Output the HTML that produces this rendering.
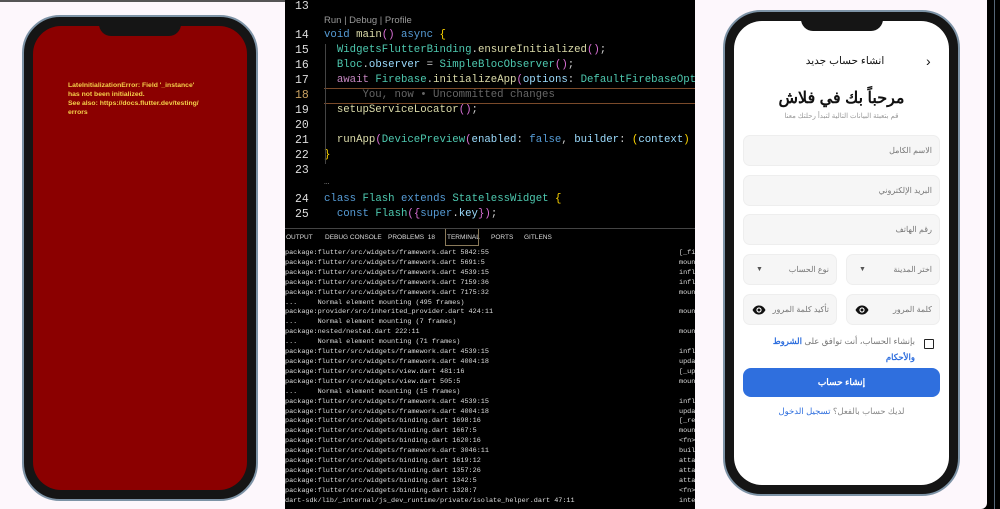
<!DOCTYPE html>
<html><head><meta charset="utf-8"><style>
*{margin:0;padding:0;box-sizing:border-box}
body{width:1000px;height:509px;overflow:hidden;background:#000;position:relative;font-family:"Liberation Sans","Noto Sans CJK SC",sans-serif}
.abs{position:absolute}
#left{left:0;top:0;width:285px;height:509px;background:#fdf7fc;border-top:2px solid #555}
.phone{position:absolute;border-radius:38px;background:#151515;border:2px solid #7d93a6}
.notch{position:absolute;left:50%;transform:translateX(-50%);top:0;width:82px;height:19px;background:#151515;border-radius:0 0 12px 12px}
#code{left:285px;top:0;width:410px;height:228px;background:#000;font-family:"Liberation Mono",monospace;font-size:10.7px;color:#ccc;overflow:hidden}
.ln{position:absolute;left:10px;width:24px;text-align:left;color:#ddd;font-size:11.5px}
.cl{position:absolute;left:39px;white-space:pre}
.k{color:#569cd6}.f{color:#dcdcaa}.t{color:#4ec9b0}.v{color:#9cdcfe}.y{color:#ffd700}.p{color:#c586c0}.m{color:#da70d6}
#tabs{left:285px;top:228px;width:410px;height:18px;border-top:1px solid #444;font-size:6.5px;color:#ddd}
#tabs span{position:absolute;top:5px}
#term,#term2{top:249px;font-family:"Liberation Mono",monospace;font-size:6.8px;color:#ddd;line-height:9.9px;white-space:pre;overflow:hidden}
#term{left:285px;width:395px;height:260px}
#term2{left:679px;width:16px;height:260px}
#right{left:695px;top:0;width:292px;height:509px;background:#fdf7fc;border-radius:0 0 6px 0}
.fld{position:absolute;background:#f6f6f6;border:1px solid #eee;border-radius:7px;font-size:8px;color:#777;text-align:right;padding-right:7px;line-height:29px;direction:rtl}
.eye{position:absolute;left:8px;top:10px}
</style></head><body>
<div id="left" class="abs">
 <div class="phone" style="left:22px;top:13px;width:236px;height:486px">
  <div style="position:absolute;left:9px;top:9px;right:9px;bottom:9px;background:#8b0000;border-radius:28px"></div>
  <div class="notch"></div>
  <div style="position:absolute;left:44px;top:64px;font-size:6.8px;line-height:9px;color:#f5d04a;font-weight:bold">LateInitializationError: Field '_instance'<br>has not been initialized.<br>See also: https://docs.flutter.dev/testing/<br>errors</div>
 </div>
</div>
<div id="code" class="abs">
 <div class="ln" style="top:0">13</div>
 <div class="cl" style="top:15px;left:39px;font-family:'Liberation Sans';font-size:9.5px;color:#999">Run | Debug | Profile</div>
 <div class="ln" style="top:29px">14</div><div class="cl" style="top:29px"><span class="k">void</span> <span class="f">main</span><span class="m">()</span> <span class="k">async</span> <span class="y">{</span></div>
 <div class="ln" style="top:44px">15</div><div class="cl" style="top:44px">  <span class="t">WidgetsFlutterBinding</span>.<span class="f">ensureInitialized</span><span class="m">()</span>;</div>
 <div class="ln" style="top:59px">16</div><div class="cl" style="top:59px">  <span class="t">Bloc</span>.<span class="v">observer</span> = <span class="t">SimpleBlocObserver</span><span class="m">()</span>;</div>
 <div class="ln" style="top:74px">17</div><div class="cl" style="top:74px">  <span class="p">await</span> <span class="t">Firebase</span>.<span class="f">initializeApp</span><span class="m">(</span><span class="v">options</span>: <span class="t">DefaultFirebaseOpti</span></div>
 <div style="position:absolute;left:39px;top:88px;width:371px;height:16px;border-top:1px solid #7a4a2a;border-bottom:1px solid #7a4a2a"></div>
 <div class="ln" style="top:89px;color:#c8a060">18</div><div class="cl" style="top:89px;color:#666">      You, now • Uncommitted changes</div>
 <div class="ln" style="top:104px">19</div><div class="cl" style="top:104px">  <span class="f">setupServiceLocator</span><span class="m">()</span>;</div>
 <div class="ln" style="top:119px">20</div>
 <div class="ln" style="top:134px">21</div><div class="cl" style="top:134px">  <span class="f">runApp</span><span class="m">(</span><span class="t">DevicePreview</span><span class="m">(</span><span class="v">enabled</span>: <span class="k">false</span>, <span class="v">builder</span>: <span class="y">(</span><span class="v">context</span><span class="y">)</span> =</div>
 <div class="ln" style="top:149px">22</div><div class="cl" style="top:149px"><span class="y">}</span></div>
 <div class="ln" style="top:164px">23</div>
 <div class="cl" style="top:177px;color:#777;font-size:9px">…</div>
 <div class="ln" style="top:193px">24</div><div class="cl" style="top:193px"><span class="k">class</span> <span class="t">Flash</span> <span class="k">extends</span> <span class="t">StatelessWidget</span> <span class="y">{</span></div>
 <div class="ln" style="top:208px">25</div><div class="cl" style="top:208px">  <span class="k">const</span> <span class="t">Flash</span><span class="m">({</span><span class="k">super</span>.<span class="v">key</span><span class="m">})</span>;</div>
 <div style="position:absolute;left:40px;top:44px;width:1px;height:120px;background:#444"></div>
</div>
<div id="tabs" class="abs">
 <span style="left:1px">OUTPUT</span><span style="left:40px">DEBUG CONSOLE</span><span style="left:103px">PROBLEMS &nbsp;18</span><span style="left:162px">TERMINAL</span><span style="left:206px">PORTS</span><span style="left:239px">GITLENS</span>
 <div style="position:absolute;left:160px;top:0;width:34px;height:17px;border:1px solid #8a7a5a;border-top:none"></div>
</div>
<div id="term" class="abs">package:flutter/src/widgets/framework.dart 5842:55
package:flutter/src/widgets/framework.dart 5691:5
package:flutter/src/widgets/framework.dart 4539:15
package:flutter/src/widgets/framework.dart 7159:36
package:flutter/src/widgets/framework.dart 7175:32
...     Normal element mounting (495 frames)
package:provider/src/inherited_provider.dart 424:11
...     Normal element mounting (7 frames)
package:nested/nested.dart 222:11
...     Normal element mounting (71 frames)
package:flutter/src/widgets/framework.dart 4539:15
package:flutter/src/widgets/framework.dart 4004:18
package:flutter/src/widgets/view.dart 481:16
package:flutter/src/widgets/view.dart 505:5
...     Normal element mounting (15 frames)
package:flutter/src/widgets/framework.dart 4539:15
package:flutter/src/widgets/framework.dart 4004:18
package:flutter/src/widgets/binding.dart 1698:16
package:flutter/src/widgets/binding.dart 1667:5
package:flutter/src/widgets/binding.dart 1620:16
package:flutter/src/widgets/framework.dart 3046:11
package:flutter/src/widgets/binding.dart 1619:12
package:flutter/src/widgets/binding.dart 1357:26
package:flutter/src/widgets/binding.dart 1342:5
package:flutter/src/widgets/binding.dart 1328:7
dart-sdk/lib/_internal/js_dev_runtime/private/isolate_helper.dart 47:11</div>
<div id="term2" class="abs">[_fi
moun
infl
infl
moun

moun

moun

infl
upda
[_up
moun

infl
upda
[_re
moun
&lt;fn&gt;
buil
atta
atta
atta
&lt;fn&gt;
inte</div>
<div id="right" class="abs">
 <div class="phone" style="left:28px;top:10px;width:237px;height:486px">
  <div style="position:absolute;left:9px;top:9px;right:9px;bottom:9px;background:#fff;border-radius:28px"></div>
  <div class="notch"></div>
 </div>
 <div class="abs" style="left:70px;top:55px;width:160px;text-align:center;font-size:10.5px;color:#111;direction:rtl">انشاء حساب جديد</div>
 <div class="abs" style="left:231px;top:53px;font-size:14px;color:#111">&#8250;</div>
 <div class="abs" style="left:48px;top:88px;width:197px;text-align:center;font-size:16px;font-weight:bold;color:#111;direction:rtl">مرحباً بك في فلاش</div>
 <div class="abs" style="left:48px;top:112px;width:197px;text-align:center;font-size:7px;color:#999;direction:rtl">قم بتعبئة البيانات التالية لتبدأ رحلتك معنا</div>
 <div class="fld" style="left:48px;top:135px;width:197px;height:31px">الاسم الكامل</div>
 <div class="fld" style="left:48px;top:175px;width:197px;height:31px">البريد الإلكتروني</div>
 <div class="fld" style="left:48px;top:214px;width:197px;height:31px">رقم الهاتف</div>
 <div class="fld" style="left:151px;top:254px;width:94px;height:31px">اختر المدينة<span style="position:absolute;left:12px;font-size:7px;color:#555">▼</span></div>
 <div class="fld" style="left:48px;top:254px;width:94px;height:31px">نوع الحساب<span style="position:absolute;left:12px;font-size:7px;color:#555">▼</span></div>
 <div class="fld" style="left:151px;top:294px;width:94px;height:31px">كلمة المرور<svg class="eye" width="14" height="10" viewBox="0 0 14 10"><path d="M0.5 5C2.5 1.5 4.5 0.5 7 0.5S11.5 1.5 13.5 5C11.5 8.5 9.5 9.5 7 9.5S2.5 8.5 0.5 5Z" fill="#111"/><circle cx="7" cy="5" r="2.6" fill="#fff"/><circle cx="7" cy="5" r="1.5" fill="#111"/></svg></div>
 <div class="fld" style="left:48px;top:294px;width:94px;height:31px">تأكيد كلمة المرور<svg class="eye" width="14" height="10" viewBox="0 0 14 10"><path d="M0.5 5C2.5 1.5 4.5 0.5 7 0.5S11.5 1.5 13.5 5C11.5 8.5 9.5 9.5 7 9.5S2.5 8.5 0.5 5Z" fill="#111"/><circle cx="7" cy="5" r="2.6" fill="#fff"/><circle cx="7" cy="5" r="1.5" fill="#111"/></svg></div>
 <div class="abs" style="left:229px;top:339px;width:10px;height:10px;border:1.5px solid #222;border-radius:1px"></div>
 <div class="abs" style="left:70px;top:333px;width:150px;text-align:right;font-size:8.5px;line-height:16px;color:#777;direction:rtl">بإنشاء الحساب، أنت توافق على <b style="color:#2f6fde">الشروط والأحكام</b></div>
 <div class="abs" style="left:48px;top:368px;width:197px;height:29px;background:#2f6fde;border-radius:8px;color:#fff;font-size:9px;font-weight:bold;text-align:center;line-height:29px">إنشاء حساب</div>
 <div class="abs" style="left:48px;top:406px;width:197px;text-align:center;font-size:8.5px;color:#888;direction:rtl">لديك حساب بالفعل؟ <span style="color:#2f6fde">تسجيل الدخول</span></div>
</div>
<div class="abs" style="left:994px;top:0;width:1px;height:509px;background:#567"></div>
</body></html>
